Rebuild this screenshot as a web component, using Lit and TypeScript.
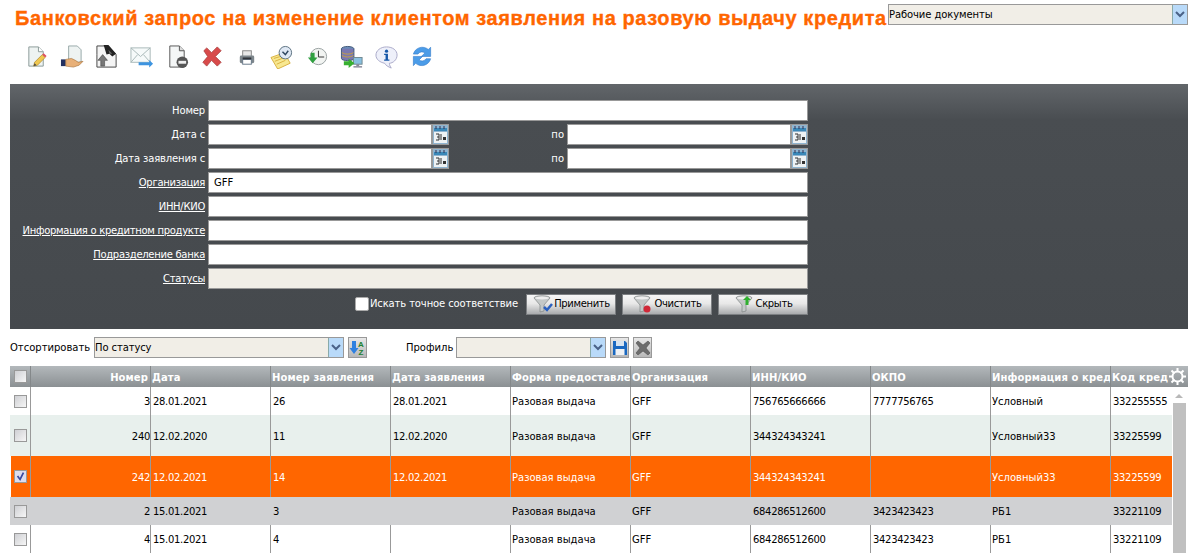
import { LitElement, html, css, svg } from "lit";
import { customElement } from "lit/decorators.js";

const doc = svg`<path d="M4 2h10l5 5v15H4z" fill="#eef3f2" stroke="#8a9a98"/><path d="M14 2v5h5" fill="#fff" stroke="#8a9a98"/>`;
const icons = [
  svg`${doc}<path d="M9 22l1-4 8-8 3 3-8 8z" fill="#f0c850" stroke="#a8842c" stroke-width=".7"/><path d="M18 10l1.500-1.500 3 3L21 13z" fill="#e05060"/><path d="M9 22l1-3 2 2z" fill="#444"/>`,
  svg`<path d="M9 1h9l4 4v13H9z" fill="#eef3f2" stroke="#98a8a8"/><rect x="1" y="15" width="5" height="7" fill="#223060"/><path d="M6 15l6-1 4 2 3 2 5-1-4 4-6 2-8-1z" fill="#e8b078" stroke="#a06830" stroke-width=".6"/>`,
  svg`<path d="M2 10V1h11l9 9v13H2z" fill="#f4f4f4" stroke="#444"/><path d="M9 0h5l8 9-4 3-3-3-3 1z" fill="#222"/><path d="M14 5l4 4h-3z" fill="#666"/><path d="M6 22v-6H3l5-6 5 6h-3v6z" fill="#777" stroke="#444" stroke-width=".6"/>`,
  svg`<rect x="1" y="3" width="20" height="15" fill="#f6fafa" stroke="#a8b8b8"/><path d="M1 3l10 9 10-9M1 18l7-8M21 18l-7-8" fill="none" stroke="#a8b8b8"/><path d="M9 18h11v-2.500l4 4-4 4V21H9z" fill="#3d94e0"/>`,
  svg`<path d="M5 1h10l5 5v17H5z" fill="#f4f6f6" stroke="#555"/><path d="M15 1v5h5" fill="#ddd" stroke="#555"/><circle cx="18" cy="18" r="6" fill="#555"/><rect x="14" y="16.500" width="8" height="3" fill="#eee"/>`,
  svg`<path d="M4 6l3-3 5 5 6-6 4 4-6 6 6 6-4 4-6-6-5 6-4-4 5-6z" fill="#d84a4a" stroke="#a83c3c" stroke-width=".8"/>`,
  svg`<rect x="8" y="6" width="9" height="6" fill="#e8e8e8" stroke="#888"/><rect x="5" y="11" width="15" height="8" rx="1.500" fill="#7d868c"/><rect x="8" y="15" width="9" height="5" fill="#fff" stroke="#678"/><rect x="8" y="13" width="9" height="2" fill="#30343a"/>`,
  svg`<path d="M1 13l14-5 6 11-13 6z" fill="#f8e890" stroke="#d8b040"/><path d="M4 14l10-3M5 17l10-4M7 20l9-4" stroke="#d8b040"/><circle cx="16" cy="8" r="6.500" fill="#dfe8f4" stroke="#5a7080"/><path d="M13 7l3 3 3-4" fill="none" stroke="#304860" stroke-width="1.500"/>`,
  svg`<circle cx="14" cy="12" r="8.500" fill="#f2f4f2" stroke="#98a0a0"/><path d="M14 6v6.500h6" fill="none" stroke="#333"/><path d="M8 19l-5-6h3V8h4v5h3z" fill="#30a040"/>`,
  svg`<ellipse cx="8" cy="4" rx="6.500" ry="2.500" fill="#6a8ab8" stroke="#405878"/><path d="M1.500 4v10c0 3 13 3 13 0V4" fill="#7a78b0" stroke="#405878"/><path d="M2 8c3 2 9 2 12 0M2 11c3 2 9 2 12 0" stroke="#c8a040" fill="none"/><rect x="14" y="13" width="9" height="7" fill="#88c0e0" stroke="#708890"/><rect x="17" y="20" width="3" height="2" fill="#889"/><rect x="14" y="22" width="9" height="1.500" fill="#889"/><path d="M4 17h5v-3l6 5-6 5v-3H4z" fill="#38b030"/>`,
  svg`<path d="M12 2c6.500 0 11 3.500 11 8.500S18.500 19 15 19c0 2 1 4 2 5-3-1-6-3-7-5-5-1-9-4-9-8.500S5.500 2 12 2z" fill="#eef0fa" stroke="#a8a8c8"/><circle cx="12" cy="6.500" r="1.700" fill="#1858a8"/><path d="M9.500 9h4v6h1.500v1.500H9.500V15H11v-4.500H9.500z" fill="#1858a8"/>`,
  svg`<g transform="translate(-2.500 -2.500) scale(1.200)"><path d="M5 10a8 8 0 0 1 13-4l2-2v8h-8l3-3a4 4 0 0 0-6 1z" fill="#4b9ce8" stroke="#2f78c8" stroke-width=".5"/><path d="M20 14a8 8 0 0 1-13 4l-2 2v-8h8l-3 3a4 4 0 0 0 6-1z" fill="#4b9ce8" stroke="#2f78c8" stroke-width=".5"/></g>`,
];

const cal = html`<span class="cal"><svg width="15" height="19" viewBox="0 0 15 19"><rect width="15" height="19" fill="#8fb4d0"/><rect x="1" y="3" width="13" height="3" fill="#3a88b8"/><path d="M3 1v3M7 1v3M11 1v3" stroke="#335" /><rect x="1" y="7" width="13" height="11" fill="#eef2f4"/><path d="M3 9h3v3H4M6 12v3H3M8 9v6" fill="none" stroke="#333"/><rect x="10" y="12" width="3" height="3" fill="#333"/></svg></span>`;

const arrow = html`<span class="arrow"><svg width="10" height="7" viewBox="0 0 10 7"><path d="M1 1l4 4 4-4" fill="none" stroke="#4a6288" stroke-width="2"/></svg></span>`;

const sel = (cls: string, t: string) => html`<div class="sel ${cls}"><span class="txt">${t}</span>${arrow}</div>`;

const funnel = (badge: unknown) => html`<svg width="22" height="18" viewBox="0 0 22 18"><path d="M2 3c0-3 16-3 16 0l-6 7v6l-4 1v-7z" fill="#c4c8c8" stroke="#808484" stroke-width=".7"/><ellipse cx="10" cy="3" rx="7" ry="1.500" fill="#eee"/>${badge}</svg>`;

const rows = [
  { n: "3", d: "28.01.2021", z: "26", dz: "28.01.2021", inn: "756765666666", ok: "7777756765", inf: "Условный", k: "332255555", c: "", chk: false },
  { n: "240", d: "12.02.2020", z: "11", dz: "12.02.2020", inn: "344324343241", ok: "", inf: "Условный33", k: "33225599", c: "alt", chk: false },
  { n: "242", d: "12.02.2021", z: "14", dz: "12.02.2021", inn: "344324343241", ok: "", inf: "Условный33", k: "33225599", c: "cur", chk: true },
  { n: "2", d: "15.01.2021", z: "3", dz: "", inn: "684286512600", ok: "3423423423", inf: "РБ1", k: "33221109", c: "gray", chk: false },
  { n: "4", d: "15.01.2021", z: "4", dz: "", inn: "684286512600", ok: "3423423423", inf: "РБ1", k: "33221109", c: "", chk: false },
];

@customElement("app-root")
export class AppRoot extends LitElement {
  static styles = css`
    :host { display: block; height: 553px; overflow: hidden; background: #fff; font: 10px/14px "DejaVu Sans", sans-serif; color: #000; }
    .top { display: flex; align-items: flex-start; height: 32px; padding-left: 15px; }
    h1 { margin: 0; padding-top: 6px; width: 873px; white-space: nowrap; font: bold 20px/24px "Liberation Sans", sans-serif; letter-spacing: 0.6px; -webkit-text-stroke: 0.35px #ff6600; color: #ff6600; }
    .sel { display: flex; box-sizing: border-box; height: 21px; background: #f1eee7; border: 1px solid #999; align-items: center; }
    .sel .txt { flex: 1; overflow: hidden; white-space: nowrap; padding-top: 1px; letter-spacing: -0.1px; }
    .arrow { width: 15px; height: 19px; flex: none; box-sizing: border-box; border-left: 1px solid #8aa; background: #b9daf9; display: flex; align-items: center; justify-content: center; }
    .s-top { width: 300px; margin-top: 4px; }
    .tools { display: flex; gap: 11px; height: 52px; padding: 13px 0 0 25px; box-sizing: border-box; }
    .tools svg { width: 24px; height: 24px; display: block; }
    .panel { margin-left: 10px; height: 245px; box-sizing: border-box; padding-top: 16px; background: linear-gradient(#62666a 0, #494d51 36px, #45494d 100%); color: #fff; display: grid; grid-template-columns: 195px 600px; column-gap: 3px; row-gap: 3px; grid-auto-rows: 21px; }
    .panel label { text-align: right; line-height: 21px; white-space: nowrap; letter-spacing: -0.15px; }
    .panel label.lnk { text-decoration: underline; letter-spacing: -0.29px; }
    input[type=text] { box-sizing: border-box; width: 100%; height: 21px; margin: 0; padding: 0 5px; border: 1px solid #999; background: #fff; font: inherit; color: #000; outline: none; min-width: 0; }
    input.ro { background: #f1eee7; }
    .dates { display: grid; grid-template-columns: 224px 17px 118px 224px 17px; }
    .dates .po { text-align: right; padding-right: 3px; line-height: 21px; }
    .cal { display: flex; box-sizing: border-box; height: 21px; border: 1px solid #999; background: #999; }
    .cal svg { display: block; margin: 0 auto; }
    .acts { grid-column: 2; display: flex; align-items: center; justify-content: flex-end; margin-top: 3px; gap: 6px; }
    .exact { display: flex; align-items: center; margin-right: 2px; white-space: nowrap; letter-spacing: -0.12px; }
    .exact i { display: block; width: 12px; height: 12px; border: 1px solid #aaa; border-radius: 2px; background: #fff; margin-right: 1px; }
    .btn { box-sizing: border-box; width: 90px; height: 21px; border: 1px solid #7c7f82; background: linear-gradient(#f6f6f6, #e8e8e8 45%, #a9abad); display: flex; align-items: center; justify-content: center; color: #000; letter-spacing: -0.35px; }
    .bar { display: flex; align-items: center; height: 37px; padding: 0 0 0 10px; box-sizing: border-box; }
    .bar .l1 { width: 84px; }
    .bar .l2 { width: 50px; margin-left: 39px; }
    .s-sort { width: 250px; }
    .s-prof { width: 150px; }
    .ib { box-sizing: border-box; width: 19px; height: 21px; margin-left: 4px; border: 1px solid #999; background: linear-gradient(#e8e8e8, #b8b8b8); display: flex; align-items: center; justify-content: center; flex: none; }
    .grid { margin-left: 10px; }
    .row { display: grid; grid-template-columns: 20px repeat(9, 120px) 62px; }
    .hd { grid-template-columns: 20px repeat(9, 120px) 1fr; height: 21px; background: linear-gradient(#b3b8bb, #8b9093); color: #fff; font-weight: bold; line-height: 21px; }
    .hd > div { border-left: 1px solid #84888a; padding: 1px 0 0 1px; overflow: hidden; white-space: nowrap; position: relative; letter-spacing: 0.1px; box-sizing: border-box; }
    .hd > div:first-child { border-left: 0; padding: 0; display: flex; align-items: center; justify-content: center; }
    .hd .r, .row .r { text-align: right; padding-right: 2px; padding-left: 0; }
    .gear { position: absolute; right: 2px; top: 2px; }
    .body { display: flex; }
    .rows { width: 1162px; flex: none; }
    .row.b { height: 28px; line-height: 28px; }
    .row.b.alt { background: #e8f0ed; height: 41px; line-height: 41px; }
    .row.b.cur { background: #ff6600; color: #fff; height: 41px; line-height: 41px; margin-left: 1px; grid-template-columns: 19px repeat(9, 120px) 62px; }
    .row.b.gray { background: #d0d1d3; }
    .row.b > div { border-left: 1px solid #999; padding: 1px 0 0 1px; overflow: hidden; white-space: nowrap; box-sizing: border-box; }
    .row.b > div.num { letter-spacing: -0.32px; padding-left: 2px; }
    .row.b > div.r { padding-left: 0; letter-spacing: -0.32px; }
    .row.b.gray > div { border-left-color: transparent; }
    .row.b > div.c0 { border-left: 0; padding: 0; display: flex; align-items: center; justify-content: center; }
    .cb { display: block; box-sizing: border-box; width: 13px; height: 13px; border: 1px solid #999; background: linear-gradient(135deg, #cfd0d4, #f6f6f6); }
    .scroll { width: 16px; flex: none; display: flex; flex-direction: column; align-items: flex-start; }
    .up { width: 0; height: 0; margin: 7px 0 0 3px; border: 4px solid transparent; border-top: 0; border-bottom: 4px solid #b8b8b8; }
    .thumb { width: 13px; height: 150px; margin: 5px 0 0 1px; background: #c0c0c0; }
  `;

  render() {
    return html`
      <div class="top"><h1>Банковский запрос на изменение клиентом заявления на разовую выдачу кредита</h1>${sel("s-top", "Рабочие документы")}</div>
      <div class="tools">${icons.map((i) => html`<svg viewBox="0 0 25 25">${i}</svg>`)}</div>
      <div class="panel">
        <label>Номер</label><input type="text" />
        <label>Дата с</label><div class="dates"><input type="text" />${cal}<span class="po">по</span><input type="text" />${cal}</div>
        <label>Дата заявления с</label><div class="dates"><input type="text" />${cal}<span class="po">по</span><input type="text" />${cal}</div>
        <label class="lnk">Организация</label><input type="text" value="GFF" />
        <label class="lnk">ИНН/КИО</label><input type="text" />
        <label class="lnk">Информация о кредитном продукте</label><input type="text" />
        <label class="lnk">Подразделение банка</label><input type="text" />
        <label class="lnk">Статусы</label><input type="text" class="ro" />
        <div class="acts">
          <span class="exact"><i></i>Искать точное соответствие</span>
          <div class="btn">${funnel(svg`<path d="M12 12l3 3 5-6" fill="none" stroke="#2a60c0" stroke-width="2.500"/>`)}Применить</div>
          <div class="btn">${funnel(svg`<circle cx="15" cy="14" r="3.500" fill="#d02838"/>`)}Очистить</div>
          <div class="btn">${funnel(svg`<path d="M13 1l-4 4h2.500v5h3V5H17z" fill="#30b030"/>`)}Скрыть</div>
        </div>
      </div>
      <div class="bar">
        <span class="l1">Отсортировать</span>${sel("s-sort", "По статусу")}
        <span class="ib"><svg width="17" height="18" viewBox="0 0 17 18"><path d="M3 2h4v7h2.500L5 15 .5 9H3z" fill="#2f80e0"/><text x="9" y="8" font-size="8" font-weight="bold" fill="#208030" font-family="Liberation Sans">A</text><text x="9.500" y="16" font-size="8" font-weight="bold" fill="#208030" font-family="Liberation Sans">Z</text></svg></span>
        <span class="l2">Профиль</span>${sel("s-prof", "")}
        <span class="ib"><svg width="16" height="16" viewBox="0 0 16 16"><path d="M1 1h12l2 2v12H1z" fill="#1a68c0"/><rect x="4" y="1" width="8" height="5" fill="#d8e4f0"/><rect x="3.500" y="9" width="9" height="6" fill="#f0f2f4"/></svg></span>
        <span class="ib"><svg width="16" height="16" viewBox="0 0 16 16"><path d="M1 3l2-2 5 4 5-4 2 2-4 5 4 5-2 2-5-4-5 4-2-2 4-5z" fill="#6c6c6c" stroke="#444" stroke-width=".5"/></svg></span>
      </div>
      <div class="grid">
        <div class="row hd">
          <div><span class="cb"></span></div>
          <div class="r">Номер</div><div>Дата</div><div>Номер заявления</div><div>Дата заявления</div><div>Форма предоставле</div><div>Организация</div><div>ИНН/КИО</div><div>ОКПО</div><div>Информация о кред</div><div>Код кред
            <svg class="gear" width="17" height="17" viewBox="0 0 17 17"><circle cx="8.500" cy="8.500" r="5" fill="none" stroke="#fff" stroke-width="2"/><path d="M8.500 0v4M8.500 13v4M0 8.500h4M13 8.500h4M2.500 2.500l3 3M11.500 11.500l3 3M14.500 2.500l-3 3M5.500 11.500l-3 3" stroke="#fff" stroke-width="2"/></svg>
          </div>
        </div>
        <div class="body">
          <div class="rows">
            ${rows.map((r) => html`<div class="row b ${r.c}">
              <div class="c0">${r.chk ? html`<svg class="cb" viewBox="0 0 13 13" style="background:#dde"><path d="M3 6l3 4 4-8" fill="none" stroke="#3848a0" stroke-width="2"/></svg>` : html`<span class="cb"></span>`}</div>
              <div class="r">${r.n}</div><div class="num">${r.d}</div><div class="num">${r.z}</div><div class="num">${r.dz}</div><div>Разовая выдача</div><div>GFF</div><div class="num">${r.inn}</div><div class="num">${r.ok}</div><div>${r.inf}</div><div class="num">${r.k}</div>
            </div>`)}
          </div>
          <div class="scroll"><div class="up"></div><div class="thumb"></div></div>
        </div>
      </div>
    `;
  }
}
